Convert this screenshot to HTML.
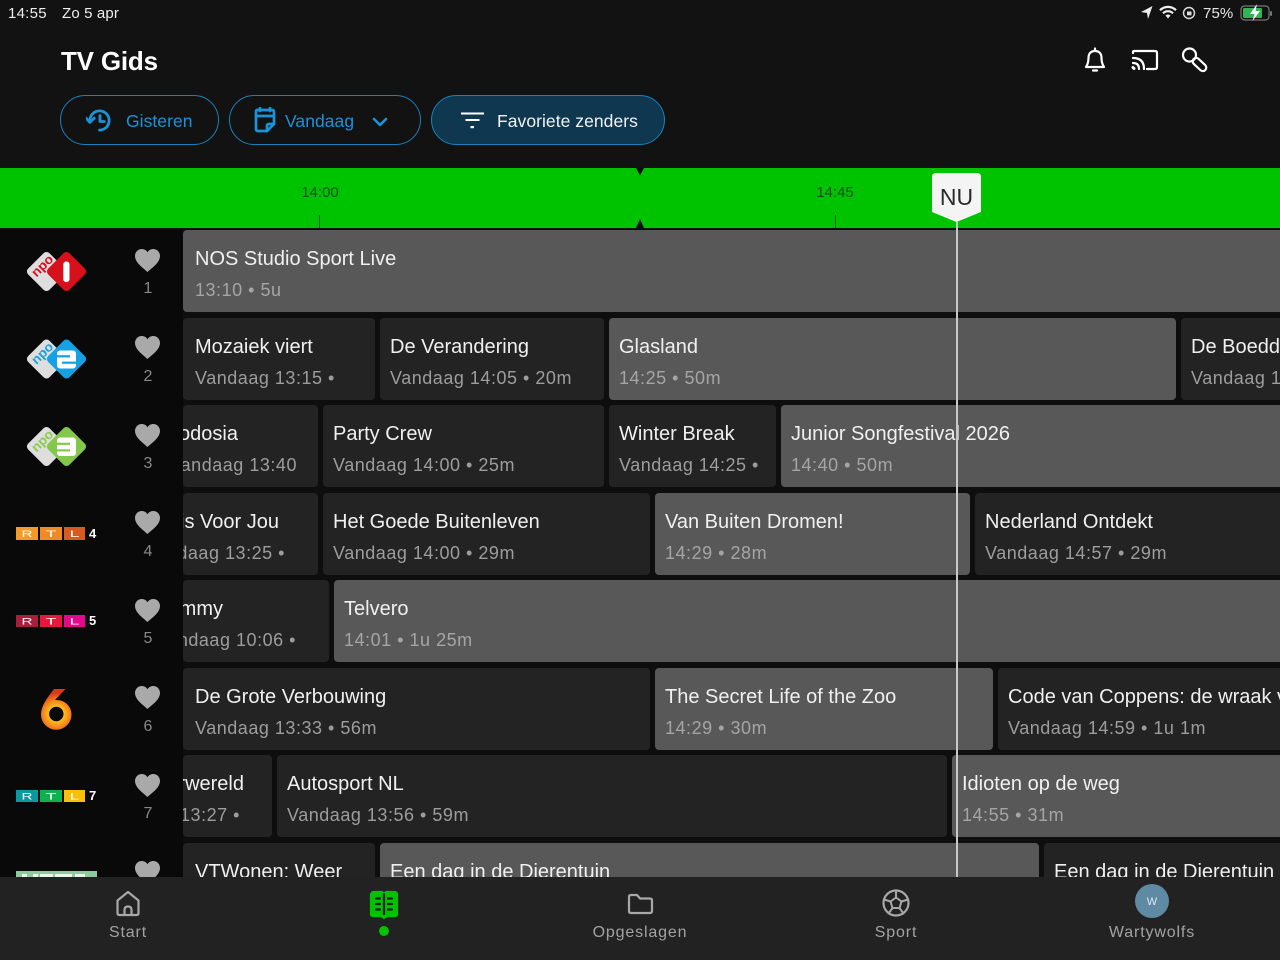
<!DOCTYPE html>
<html><head><meta charset="utf-8"><title>TV Gids</title>
<style>
*{box-sizing:border-box}
html,body{margin:0;padding:0;width:1280px;height:960px;overflow:hidden;background:#121212;font-family:"Liberation Sans",sans-serif}
.a{position:absolute}
#guide{position:absolute;left:0;top:230px;width:1280px;height:647px;overflow:hidden;background:#0e0e0e}
#side{position:absolute;left:0;top:0;width:183px;height:647px;background:#090909}
.c{position:absolute;height:82px;background:#232323;border-radius:4px;overflow:hidden;color:#f0f0f0}
.c.l{background:#585858}
.t,.s{position:absolute;white-space:nowrap;left:12px}
.t{top:17px;font-size:20px;line-height:24px;letter-spacing:0}
.s{top:48px;font-size:18px;line-height:24px;letter-spacing:.52px;color:#9d9d9d}
.c.l .s{color:#a5a5a5}
.c.x .t,.c.x .s{left:10px}
.n{position:absolute;width:30px;left:133px;text-align:center;font-size:16px;color:#888;line-height:18px}
.btn{position:absolute;top:95px;height:50px;border:1.5px solid #1a80bd;border-radius:25px;color:#1a93d8;font-size:17.5px;letter-spacing:.05px;line-height:50px}
.nav{position:absolute;top:923px;width:200px;text-align:center;font-size:16px;line-height:20px;letter-spacing:.85px;color:#a3a3a3}
.rtlnum{position:absolute;left:89px;color:#fff;font-size:13px;font-weight:bold;line-height:14px}
</style></head>
<body>
<svg width="0" height="0" style="position:absolute"><defs>
<path id="heart" d="M12.5 23 C9 19.5 0 14 0 7 C0 3 3 0 6.7 0 C9.2 0 11.3 1.2 12.5 3.2 C13.7 1.2 15.8 0 18.3 0 C22 0 25 3 25 7 C25 14 16 19.5 12.5 23Z" fill="#a9a9a9"/>
</defs></svg>

<div class="a" style="left:8px;top:5px;color:#eee;font-size:15px;line-height:17px;letter-spacing:.25px">14:55</div>
<div class="a" style="left:62px;top:5px;color:#eee;font-size:15px;line-height:17px;letter-spacing:.15px">Zo 5 apr</div>
<div class="a" style="left:1203px;top:5px;color:#e4e4e4;font-size:15px;line-height:17px;letter-spacing:.1px">75%</div>

<svg class="a" style="left:1136px;top:0" width="144" height="26" viewBox="1136 0 144 26">
<path d="M1152.5 6 L1141 12 L1147 13 L1148 19Z" fill="#eee"/>
<path d="M1160 10.3 a11 11 0 0 1 16 0 M1163 13.3 a7 7 0 0 1 10 0" fill="none" stroke="#eee" stroke-width="2.2"/>
<path d="M1165.5 15.5 a3.5 3.5 0 0 1 5 0 L1168 18.5Z" fill="#eee"/>
<circle cx="1189" cy="13" r="5.5" fill="none" stroke="#ddd" stroke-width="1.4"/>
<rect x="1187" y="11.5" width="4.5" height="3.8" fill="#ddd"/>
<rect x="1241" y="6" width="28" height="14" rx="3.5" fill="none" stroke="#777" stroke-width="1.2"/>
<rect x="1243" y="8" width="19" height="10" rx="1.5" fill="#30b457"/>
<rect x="1270" y="11" width="2" height="5" rx="1" fill="#777"/>
<path d="M1257 4 L1250 14 L1254.5 14 L1252.5 21 L1260 11 L1255.5 11Z" fill="#fff"/>
</svg>

<div class="a" style="left:61px;top:45px;color:#fff;font-size:26px;font-weight:bold;line-height:32px;letter-spacing:-.2px">TV Gids</div>

<svg class="a" style="left:1080px;top:44px" width="135" height="32" viewBox="1080 44 135 32" fill="none" stroke="#fff" stroke-width="2.2" stroke-linecap="round" stroke-linejoin="round">
<path d="M1086 67 C1088 64 1088.5 62 1088.5 58 C1088.5 53.5 1091 51 1095 51 C1099 51 1101.5 53.5 1101.5 58 C1101.5 62 1102 64 1104 67Z"/>
<path d="M1095 48.5 V50 M1093 70.5 H1097"/>
<path d="M1133 53 V52 Q1133 51 1134.5 51 H1155 Q1157 51 1157 53 V67 Q1157 69 1155 69 H1147"/>
<path d="M1133 58 Q1144 58 1144 69 M1133 63 Q1139 63 1139 69"/>
<path d="M1133 67.5 L1134 68.5" stroke-width="3"/>
<circle cx="1189.5" cy="55" r="6.5"/>
<rect x="1191.5" y="61" width="16" height="7" rx="3.5" transform="rotate(43 1199.5 64.5)"/>
</svg>

<div class="btn" style="left:60px;width:159px;padding-left:65px">Gisteren</div>
<svg class="a" style="left:86px;top:108px" width="27" height="25" viewBox="0 0 28 26" fill="none" stroke="#1a93d8" stroke-width="2.9" stroke-linecap="round" stroke-linejoin="round">
<path d="M4 13 A10 10 0 1 1 14 23"/><path d="M0 10.5 L4 15 L8.5 10.5" /><path d="M14.5 8 V14 H19"/>
</svg>

<div class="btn" style="left:229px;width:192px;padding-left:55px">Vandaag</div>
<svg class="a" style="left:253px;top:107px" width="24" height="26" viewBox="0 0 24 26" fill="none" stroke="#1a93d8" stroke-width="2.7" stroke-linecap="round" stroke-linejoin="round">
<path d="M4 3 H19 Q21 3 21 5 V17 L14 24 H5 Q3 24 3 22 V5 Q3 3 4 3Z"/><path d="M3 9 H21" /><path d="M7 1 V4 M17 1 V4"/><path d="M14 24 V19 Q14 17 16 17 H21"/>
</svg>
<svg class="a" style="left:372px;top:116px" width="16" height="12" viewBox="0 0 16 12"><path d="M2 3 L8 9 L14 3" fill="none" stroke="#1a93d8" stroke-width="2.6" stroke-linecap="round" stroke-linejoin="round"/></svg>

<div class="btn" style="left:431px;width:234px;padding-left:65px;background:#0f3850;color:#f2f2f2">Favoriete zenders</div>
<svg class="a" style="left:460px;top:111px" width="26" height="20" viewBox="0 0 26 20"><path d="M1 2.5 H24 M5.5 9 H19.5" stroke="#fff" stroke-width="2" fill="none"/><rect x="10.5" y="15" width="3.5" height="2.2" fill="#fff"/></svg>

<div class="a" style="left:0;top:168px;width:1280px;height:60px;background:#00c300"></div>
<div class="a" style="left:0;top:228px;width:1280px;height:2px;background:#061006"></div>
<svg class="a" style="left:634px;top:167px" width="12" height="63" viewBox="0 0 12 63"><path d="M2 1 H10 L6 8.5Z M6 52 L10 61 H2Z" fill="#0b0f0b"/></svg>
<div class="a" style="left:290px;top:184px;width:60px;text-align:center;color:#0b5210;font-size:15px;line-height:18px">14:00</div>
<div class="a" style="left:805px;top:184px;width:60px;text-align:center;color:#0b5210;font-size:15px;line-height:18px">14:45</div>
<div class="a" style="left:319px;top:215px;width:1px;height:13px;background:#0d4a12"></div>
<div class="a" style="left:835px;top:215px;width:1px;height:13px;background:#0d4a12"></div>

<div id="guide">
<div id="side"></div>

<div class="c l" style="left:183px;top:0;width:1097px;border-radius:4px 0 0 4px"><span class="t">NOS Studio Sport Live</span><span class="s">13:10 • 5u</span></div>

<div class="c" style="left:183px;top:88px;width:192px"><span class="t">Mozaiek viert</span><span class="s">Vandaag 13:15 •</span></div>
<div class="c x" style="left:380px;top:88px;width:224px"><span class="t">De Verandering</span><span class="s">Vandaag 14:05 • 20m</span></div>
<div class="c l x" style="left:609px;top:88px;width:567px"><span class="t">Glasland</span><span class="s">14:25 • 50m</span></div>
<div class="c x" style="left:1181px;top:88px;width:120px"><span class="t">De Boeddha</span><span class="s">Vandaag 14:50</span></div>

<div class="c" style="left:183px;top:175px;width:135px"><span class="t" style="left:auto;right:80px">Theodosia</span><span class="s" style="left:auto;right:21px">Vandaag 13:40</span></div>
<div class="c x" style="left:323px;top:175px;width:281px"><span class="t">Party Crew</span><span class="s">Vandaag 14:00 • 25m</span></div>
<div class="c x" style="left:609px;top:175px;width:167px"><span class="t">Winter Break</span><span class="s">Vandaag 14:25 •</span></div>
<div class="c l x" style="left:781px;top:175px;width:499px;border-radius:4px 0 0 4px"><span class="t">Junior Songfestival 2026</span><span class="s">14:40 • 50m</span></div>

<div class="c" style="left:183px;top:263px;width:135px"><span class="t" style="left:auto;right:39px">Alles is Voor Jou</span><span class="s" style="left:auto;right:33px">Vandaag 13:25 •</span></div>
<div class="c x" style="left:323px;top:263px;width:327px"><span class="t">Het Goede Buitenleven</span><span class="s">Vandaag 14:00 • 29m</span></div>
<div class="c l x" style="left:655px;top:263px;width:315px"><span class="t">Van Buiten Dromen!</span><span class="s">14:29 • 28m</span></div>
<div class="c x" style="left:975px;top:263px;width:305px;border-radius:4px 0 0 4px"><span class="t">Nederland Ontdekt</span><span class="s">Vandaag 14:57 • 29m</span></div>

<div class="c" style="left:183px;top:350px;width:146px"><span class="t" style="left:auto;right:106px">Tommy</span><span class="s" style="left:auto;right:33px">Vandaag 10:06 •</span></div>
<div class="c l x" style="left:334px;top:350px;width:946px;border-radius:4px 0 0 4px"><span class="t">Telvero</span><span class="s">14:01 • 1u 25m</span></div>

<div class="c" style="left:183px;top:438px;width:467px"><span class="t">De Grote Verbouwing</span><span class="s">Vandaag 13:33 • 56m</span></div>
<div class="c l x" style="left:655px;top:438px;width:338px"><span class="t">The Secret Life of the Zoo</span><span class="s">14:29 • 30m</span></div>
<div class="c x" style="left:998px;top:438px;width:282px;border-radius:4px 0 0 4px"><span class="t">Code van Coppens: de wraak van</span><span class="s">Vandaag 14:59 • 1u 1m</span></div>

<div class="c" style="left:183px;top:525px;width:89px"><span class="t" style="left:auto;right:28px">Onderwereld</span><span class="s" style="left:auto;right:32px">Vandaag 13:27 •</span></div>
<div class="c x" style="left:277px;top:525px;width:670px"><span class="t">Autosport NL</span><span class="s">Vandaag 13:56 • 59m</span></div>
<div class="c l x" style="left:952px;top:525px;width:328px;border-radius:4px 0 0 4px"><span class="t">Idioten op de weg</span><span class="s">14:55 • 31m</span></div>

<div class="c" style="left:183px;top:613px;width:192px"><span class="t">VTWonen: Weer</span></div>
<div class="c l x" style="left:380px;top:613px;width:659px"><span class="t">Een dag in de Dierentuin</span></div>
<div class="c x" style="left:1044px;top:613px;width:236px;border-radius:4px 0 0 4px"><span class="t">Een dag in de Dierentuin</span></div>

<svg class="a" style="left:135px;top:0" width="26" height="647" viewBox="0 0 26 647">
<use href="#heart" y="19"/><use href="#heart" y="106"/><use href="#heart" y="194"/><use href="#heart" y="281"/><use href="#heart" y="369"/><use href="#heart" y="456"/><use href="#heart" y="544"/><use href="#heart" y="631"/>
</svg>
<div class="n" style="top:50px">1</div><div class="n" style="top:138px">2</div><div class="n" style="top:225px">3</div><div class="n" style="top:313px">4</div><div class="n" style="top:400px">5</div><div class="n" style="top:488px">6</div><div class="n" style="top:575px">7</div>

<svg class="a" style="left:0;top:0" width="183" height="647" viewBox="0 230 183 647">
<g>
<rect x="31.5" y="256.5" width="30" height="30" rx="4" fill="#dedede" transform="rotate(45 46.5 271.5)"/>
<text x="42.5" y="270" font-size="13" font-weight="bold" fill="#d8101c" text-anchor="middle" transform="rotate(-45 42.5 266)" font-family="Liberation Sans" textLength="25" lengthAdjust="spacingAndGlyphs">npo</text>
<rect x="51.5" y="256.5" width="30" height="30" rx="4" fill="#d8101c" transform="rotate(45 66.5 271.5)"/>
<rect x="63.3" y="261.5" width="6.2" height="20.5" rx="2.8" fill="#fff"/>
</g>
<g>
<rect x="31.5" y="344" width="30" height="30" rx="4" fill="#dedede" transform="rotate(45 46.5 359)"/>
<text x="42.5" y="357.5" font-size="13" font-weight="bold" fill="#1ea2e2" text-anchor="middle" transform="rotate(-45 42.5 353.5)" font-family="Liberation Sans" textLength="25" lengthAdjust="spacingAndGlyphs">npo</text>
<rect x="51.5" y="344" width="30" height="30" rx="4" fill="#16a1e3" transform="rotate(45 66.5 359)"/>
<rect x="57" y="350.5" width="19" height="18" rx="3" fill="#fff"/>
<rect x="56" y="355.2" width="14" height="2.2" fill="#16a1e3"/>
<rect x="62" y="361.6" width="15" height="2.2" fill="#16a1e3"/>
</g>
<g>
<rect x="31.5" y="431.5" width="30" height="30" rx="4" fill="#dedede" transform="rotate(45 46.5 446.5)"/>
<text x="42.5" y="445" font-size="13" font-weight="bold" fill="#8ccc4e" text-anchor="middle" transform="rotate(-45 42.5 441)" font-family="Liberation Sans" textLength="25" lengthAdjust="spacingAndGlyphs">npo</text>
<rect x="51.5" y="431.5" width="30" height="30" rx="4" fill="#83c84a" transform="rotate(45 66.5 446.5)"/>
<rect x="57" y="437.5" width="19" height="18.5" rx="3" fill="#fff"/>
<rect x="56" y="442.7" width="14" height="2.2" fill="#83c84a"/>
<rect x="56" y="449.3" width="14" height="2.2" fill="#83c84a"/>
</g>

<g font-family="Liberation Sans" font-size="9" fill="#fff" text-anchor="middle">
<rect x="16" y="527" width="22" height="13" fill="#f59a23"/><rect x="40" y="527" width="22" height="13" fill="#ef8a24"/><rect x="64" y="527" width="21" height="13" fill="#d95a1f"/>
<text x="27" y="537" textLength="11" lengthAdjust="spacingAndGlyphs">R</text><text x="51" y="537" textLength="11" lengthAdjust="spacingAndGlyphs">T</text><text x="74.5" y="537" textLength="10" lengthAdjust="spacingAndGlyphs">L</text>
<rect x="16" y="615" width="22" height="12" fill="#a81e3c"/><rect x="40" y="615" width="22" height="12" fill="#e6183c"/><rect x="64" y="615" width="21" height="12" fill="#e6088c"/>
<text x="27" y="624.5" textLength="11" lengthAdjust="spacingAndGlyphs">R</text><text x="51" y="624.5" textLength="11" lengthAdjust="spacingAndGlyphs">T</text><text x="74.5" y="624.5" textLength="10" lengthAdjust="spacingAndGlyphs">L</text>
<rect x="16" y="790" width="22" height="12" fill="#079aa0"/><rect x="40" y="790" width="22" height="12" fill="#10b050"/><rect x="64" y="790" width="21" height="12" fill="#f8c008"/>
<text x="27" y="799.5" textLength="11" lengthAdjust="spacingAndGlyphs">R</text><text x="51" y="799.5" textLength="11" lengthAdjust="spacingAndGlyphs">T</text><text x="74.5" y="799.5" textLength="10" lengthAdjust="spacingAndGlyphs">L</text>
</g>

<defs><radialGradient id="six2" gradientUnits="userSpaceOnUse" cx="56.5" cy="714" r="21"><stop offset=".3" stop-color="#ffc81e"/><stop offset=".62" stop-color="#f58a1c"/><stop offset="1" stop-color="#d63a1c"/></radialGradient></defs>
<path d="M54 689 H65.5 L55 700 C65 699.5 71.5 706.5 71.5 714.5 A15.25 15.25 0 0 1 41 714.5 C41 706 47 698 54 689Z M56.3 706.8 A7.2 7.2 0 1 0 56.3 721.2 A7.2 7.2 0 1 0 56.3 706.8Z" fill="url(#six2)" fill-rule="evenodd"/>

<rect x="16" y="871" width="81" height="6" fill="#8fc9a0"/>
<path d="M22 874h5v3h-5z M33 874h5v3h-5z M40 874h13v3h-13z M55 874h17v3h-17z M75 874h10v3h-10z" fill="#eaf5ee"/>
</svg>
<div class="rtlnum" style="left:89px;top:297px">4</div>
<div class="rtlnum" style="left:89px;top:384px">5</div>
<div class="rtlnum" style="left:89px;top:559px">7</div>

<div class="a" style="left:956px;top:0;width:2px;height:647px;background:#c8c8c8"></div>
</div>

<div class="a" style="left:956px;top:222px;width:2px;height:8px;background:#c8c8c8"></div>
<svg class="a" style="left:931px;top:172px" width="51" height="52" viewBox="0 0 51 52"><path d="M5 1 H46 Q50 1 50 5 V40 L25.5 50 L1 40 V5 Q1 1 5 1Z" fill="#f4f4f4"/><text x="25.5" y="33" text-anchor="middle" font-family="Liberation Sans" font-size="23" fill="#2a2a2a">NU</text></svg>

<div class="a" style="left:0;top:877px;width:1280px;height:83px;background:#222"></div>

<svg class="a" style="left:0;top:877px" width="1280" height="83" viewBox="0 877 1280 83" fill="none" stroke="#a8a8a8" stroke-width="2.2" stroke-linecap="round" stroke-linejoin="round">
<path d="M117.5 900.5 L128 892 L138.5 900.5 V913 Q138.5 915 136.5 915 H119.5 Q117.5 915 117.5 913Z"/>
<path d="M124.5 915 V910 Q124.5 906.5 128 906.5 Q131.5 906.5 131.5 910 V915"/>
<path d="M372 893 Q372 892 374 892 H382 L384 894 L386 892 H394 Q397 892 397 894 V914 Q397 916 395 916 H386.5 L384 918 L381.5 916 H373 Q371 916 371 914 V894 Z" fill="#00c300" stroke="#00c300"/>
<path d="M384 894 V914 M376 898.5 H380 M376 904 H380 M376 909.5 H380 M388 898.5 H392 M388 904 H392 M388 909.5 H392" stroke="#222" stroke-width="2.2"/>
<circle cx="384" cy="931" r="5" fill="#00c300" stroke="none"/>
<path d="M629 897 Q629 895 631 895 H637 L640 898.5 H650 Q652 898.5 652 900.5 V911 Q652 913 650 913 H631 Q629 913 629 911Z"/>
<circle cx="896" cy="903" r="12.5"/>
<path d="M896 897.5 L901.5 901.5 L899.5 908 H892.5 L890.5 901.5Z M896 897.5 V891 M901.5 901.5 L908 899.5 M899.5 908 L903.5 913.5 M892.5 908 L888.5 913.5 M890.5 901.5 L884 899.5" stroke-width="2"/>
<circle cx="1152" cy="901" r="17" fill="#5f8aa3" stroke="none"/>
<text x="1152" y="905" text-anchor="middle" font-family="Liberation Sans" font-size="11" fill="#dfe8ee" stroke="none">W</text>
</svg>
<div class="nav" style="left:28px">Start</div>
<div class="nav" style="left:540px">Opgeslagen</div>
<div class="nav" style="left:796px">Sport</div>
<div class="nav" style="left:1052px">Wartywolfs</div>
</body></html>
